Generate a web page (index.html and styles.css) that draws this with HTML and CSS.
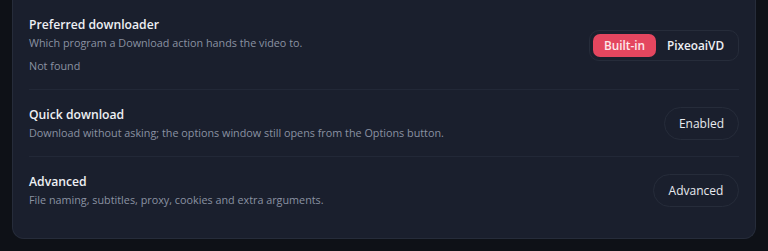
FILE: index.html
```html
<!DOCTYPE html>
<html lang="en">
<head>
<meta charset="utf-8">
<link rel="stylesheet" href="styles.css">
</head>
<body>
<div class="page">
  <section class="card">
    <div class="row">
      <div class="info">
        <div class="title">Preferred downloader</div>
        <div class="desc">Which program a Download action hands the video to.</div>
        <div class="status">Not found</div>
      </div>
      <div class="segmented">
        <button class="seg active">Built-in</button>
        <button class="seg">PixeoaiVD</button>
      </div>
    </div>
    <div class="row">
      <div class="info">
        <div class="title">Quick download</div>
        <div class="desc">Download without asking; the options window still opens from the Options button.</div>
      </div>
      <button class="pill">Enabled</button>
    </div>
    <div class="row last">
      <div class="info">
        <div class="title">Advanced</div>
        <div class="desc">File naming, subtitles, proxy, cookies and extra arguments.</div>
      </div>
      <button class="pill">Advanced</button>
    </div>
  </section>
</div>
</body>
</html>
```
FILE: styles.css
```css
* { box-sizing: border-box; }
html, body { margin: 0; padding: 0; }
body {
  background: #0e1117;
  font-family: "Open Sans", "Noto Sans", sans-serif;
  color: #eceef2;
  height: 251px;
  overflow: hidden;
}
.page {
  padding: 0 12px;
}
.card {
  background: #1a1f2d;
  border: 1px solid #262c3a;
  border-top: 0;
  border-radius: 0 0 12px 12px;
  padding: 0 16px 15px;
}
.row {
  display: flex;
  align-items: center;
  justify-content: space-between;
  padding: 16px 0 15px;
  border-bottom: 1px solid #222837;
}
.row.last { border-bottom: 0; }
.title {
  font-size: 12.2px;
  font-weight: 600;
  line-height: 18px;
  color: #eef0f4;
}
.desc {
  font-size: 10.8px;
  line-height: 16px;
  margin-top: 1px;
  color: #8a92a2;
}
.status {
  font-size: 10.8px;
  line-height: 16px;
  margin-top: 7px;
  color: #8a92a2;
}
.segmented {
  display: flex;
  padding: 3px;
  border: 1px solid #262c3a;
  border-radius: 10px;
  width: 150px;
  height: 31px;
}
.seg {
  font-family: inherit;
  font-size: 11.8px;
  font-weight: 600;
  border: 0;
  background: transparent;
  color: #eef0f4;
  border-radius: 7px;
  height: 23px;
  padding: 0;
}
.seg.active {
  background: #e4465f;
  color: #fde8ec;
  width: 63px;
}
.seg:not(.active) { flex: 1; }
.pill {
  font-family: inherit;
  font-size: 12px;
  font-weight: 500;
  color: #e8eaef;
  background: transparent;
  border: 1px solid #262c3a;
  border-radius: 17px;
  height: 33px;
  padding: 0 14px;
}
.row:nth-child(2) .pill { width: 75px; padding: 0; }
.row.last .pill { width: 86px; padding: 0; }
```
